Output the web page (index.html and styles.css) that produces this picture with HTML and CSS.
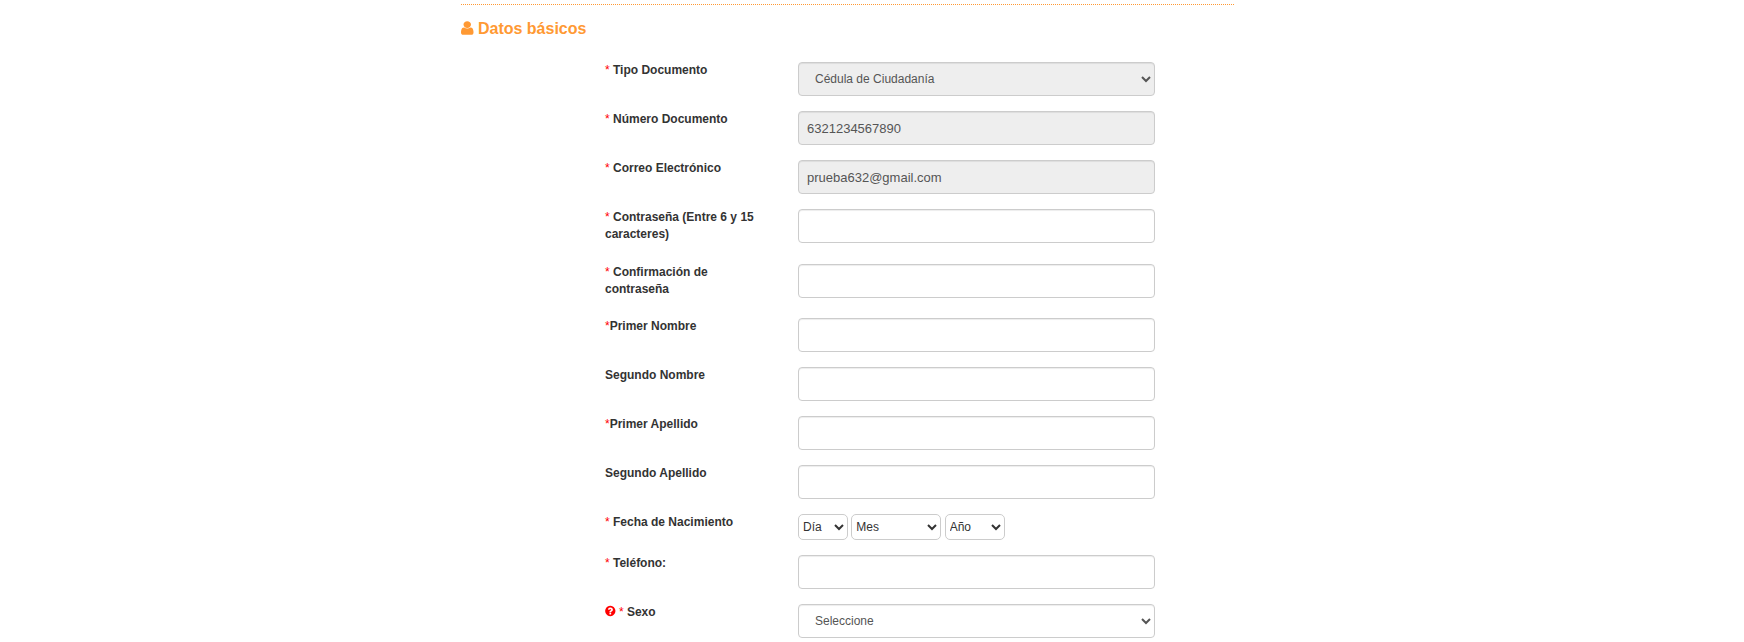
FILE: index.html
```html
<!DOCTYPE html>
<html lang="es">
<head>
<meta charset="utf-8">
<title>Datos básicos</title>
<link rel="stylesheet" href="styles.css">
</head>
<body>
<main class="panel">
  <h2 class="panel-title"><svg class="icon-user" viewBox="0 0 1280 1792" preserveAspectRatio="none"><path d="M1280 1399q0 109-62.500 187t-150.500 78h-854q-88 0-150.500-78t-62.500-187q0-85 8.500-160.500t31.500-152 58.500-131 94-89 134.500-34.500q131 128 313 128t313-128q76 0 134.500 34.500t94 89 58.500 131 31.500 152 8.500 160.500zm-256-887q0 159-112.500 271.500t-271.500 112.500-271.500-112.500-112.500-271.500 112.500-271.500 271.500-112.500 271.500 112.500 112.500 271.500z"/></svg> Datos básicos</h2>
  <form class="form">
    <div class="row">
      <label class="label"><span class="req">*</span> Tipo Documento</label>
      <select class="control select" disabled><option>Cédula de Ciudadanía</option></select>
    </div>
    <div class="row">
      <label class="label"><span class="req">*</span> Número Documento</label>
      <input class="control" type="text" value="6321234567890" disabled>
    </div>
    <div class="row">
      <label class="label"><span class="req">*</span> Correo Electrónico</label>
      <input class="control" type="text" value="prueba632@gmail.com" disabled>
    </div>
    <div class="row">
      <label class="label"><span class="req">*</span> Contraseña (Entre 6 y 15 caracteres)</label>
      <input class="control" type="password">
    </div>
    <div class="row">
      <label class="label"><span class="req">*</span> Confirmación de contraseña</label>
      <input class="control" type="password">
    </div>
    <div class="row">
      <label class="label"><span class="req">*</span>Primer Nombre</label>
      <input class="control" type="text">
    </div>
    <div class="row">
      <label class="label">Segundo Nombre</label>
      <input class="control" type="text">
    </div>
    <div class="row">
      <label class="label"><span class="req">*</span>Primer Apellido</label>
      <input class="control" type="text">
    </div>
    <div class="row">
      <label class="label">Segundo Apellido</label>
      <input class="control" type="text">
    </div>
    <div class="row">
      <label class="label"><span class="req">*</span> Fecha de Nacimiento</label>
      <div class="date">
        <select class="date-select day"><option>Día</option></select>
        <select class="date-select month"><option>Mes</option></select>
        <select class="date-select year"><option>Año</option></select>
      </div>
    </div>
    <div class="row">
      <label class="label"><span class="req">*</span> Teléfono:</label>
      <input class="control" type="text">
    </div>
    <div class="row">
      <label class="label"><svg class="icon-help" viewBox="0 0 1536 1792"><path d="M896 1376v-192q0-14-9-23t-23-9h-192q-14 0-23 9t-9 23v192q0 14 9 23t23 9h192q14 0 23-9t9-23zm256-672q0-88-55.500-163t-138.500-116-170-41q-243 0-371 213-15 24 8 42l132 100q7 6 19 6 16 0 25-12 53-68 86-92 34-24 86-24 48 0 85.500 26t37.500 59q0 38-20 61t-68 45q-63 28-115.500 86.500t-52.500 125.500v36q0 14 9 23t23 9h192q14 0 23-9t9-23q0-19 21.500-49.500t54.500-49.500q32-18 49-28.500t46-35 44.500-48 28-60.500 12.500-81zm384 192q0 209-103 385.500t-279.500 279.500-385.500 103-385.500-103-279.500-279.500-103-385.500 103-385.500 279.500-279.500 385.500-103 385.500 103 279.500 279.500 103 385.500z"/></svg> <span class="req">*</span> Sexo</label>
      <select class="control select"><option>Seleccione</option></select>
    </div>
  </form>
</main>
</body>
</html>
```
FILE: styles.css
```css
* {
  box-sizing: border-box;
}

body {
  margin: 0;
  height: 642px;
  overflow: hidden;
  background: #fff;
  color: #333;
  font: 12px/17px "Liberation Sans", Arial, sans-serif;
}

.panel {
  width: 773px;
  margin-left: 461px;
  padding-top: 4px;
}

.panel-title {
  margin: 0;
  padding-top: 14px;
  height: 58.4px;
  border-top: 1px dotted #ff9933;
  color: #ff9933;
  font-size: 16px;
  line-height: 20px;
}

.icon-user {
  width: 12.5px;
  height: 16px;
  fill: currentColor;
  vertical-align: -2.3px;
}

.icon-help {
  width: 10.6px;
  height: 12px;
  fill: #f00;
  vertical-align: -1.5px;
}

.form {
  margin-left: 144px;
}

.row {
  display: grid;
  grid-template-columns: 163px 357px;
  column-gap: 30px;
  align-items: start;
  margin-bottom: 15px;
}

.label {
  padding-bottom: 5.28px;
  font-weight: bold;
}

.req {
  color: #f00;
  font-weight: normal;
}

.control {
  width: 357px;
  height: 34px;
  margin: 0;
  padding: 6px 8px;
  border: 1px solid #ccc;
  border-radius: 4px;
  background-color: #fff;
  box-shadow: inset 0 1px 1px rgba(0, 0, 0, 0.075);
  color: #555;
  font: 13px/18px "Liberation Sans", Arial, sans-serif;
}

.select {
  padding: 6px 12px;
  font-size: 12px;
}

.control:disabled {
  background-color: #eee;
  opacity: 1;
}

.date {
  display: flex;
  gap: 3.33px;
  height: 26px;
}

.date-select {
  height: 26px;
  margin: 0;
  padding: 0;
  border: 1px solid #ccc;
  border-radius: 5px;
  background-color: #fff;
  color: #333;
  font: 12px "Liberation Sans", Arial, sans-serif;
}

.day {
  width: 50px;
}

.month {
  width: 90px;
}

.year {
  width: 60px;
}
```
